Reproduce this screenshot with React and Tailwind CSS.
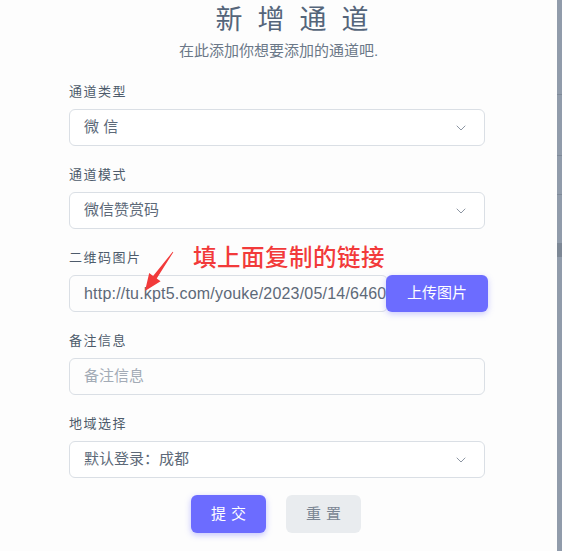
import React from 'react';
import { ChevronDown } from 'lucide-react';

const font = { fontFamily: '"Liberation Sans", "Noto Sans CJK SC", sans-serif' };

function Label({ children }) {
    return <div className="text-[13px] leading-[14px] tracking-[1.5px] text-[#4d5b6b] mb-[10px]">{children}</div>;
}

function SelectBox({ value }) {
    return (
        <div className="h-[37px] border border-[#dadfe5] rounded-[6px] flex items-center justify-between pl-[14px] pr-[15px] bg-white">
            <span className="text-[15px] text-[#5d6978] whitespace-pre">{value}</span>
            <ChevronDown size={16} strokeWidth={1.5} className="text-[#8d96a3]" />
        </div>
    );
}

export default function App() {
    return (
        <div className="w-[562px] h-[551px] flex bg-[#fdfdfd] overflow-hidden" style={font}>
            <div className="flex-1 relative">
                <div className="text-center pt-[4px] text-[27px] leading-[32px] tracking-[15px] pl-[42px] text-[#55657a]">新增通道</div>
                <div className="text-center mt-[5px] text-[15px] leading-[20px] text-[#6b7888]">在此添加你想要添加的通道吧.</div>

                <div className="ml-[69px] w-[416px] mt-[24px]">
                    <Label>通道类型</Label>
                    <SelectBox value="微 信" />

                    <div className="mt-[22px]"><Label>通道模式</Label></div>
                    <SelectBox value="微信赞赏码" />

                    <div className="mt-[22px]"><Label>二维码图片</Label></div>
                    <div className="flex">
                        <div className="flex-1 h-[37px] border border-[#dadfe5] rounded-[6px] flex items-center pl-[14px] overflow-hidden whitespace-nowrap">
                            <span className="text-[16px] tracking-[0.2px] text-[#5d6978]">http://tu.kpt5.com/youke/2023/05/14/6460</span>
                        </div>
                        <button className="-ml-[2px] mr-[-3px] w-[102px] h-[37px] rounded-[6px] bg-[#6c6cff] text-white text-[15px] shadow-[0_2px_6px_rgba(108,108,255,0.35)] relative">上传图片</button>
                    </div>

                    <div className="mt-[22px]"><Label>备注信息</Label></div>
                    <div className="h-[37px] border border-[#dadfe5] rounded-[6px] flex items-center pl-[14px]">
                        <span className="text-[15px] text-[#a3abb6]">备注信息</span>
                    </div>

                    <div className="mt-[22px]"><Label>地域选择</Label></div>
                    <SelectBox value="默认登录：成都" />

                    <div className="flex justify-center gap-[20px] mt-[17px] mr-[2px]">
                        <button className="w-[75px] h-[38px] rounded-[6px] bg-[#6c6cff] text-white text-[15px] tracking-[5px] pl-[5px] shadow-[0_2px_6px_rgba(108,108,255,0.4)]">提交</button>
                        <button className="w-[75px] h-[38px] rounded-[6px] bg-[#e9ecef] text-[#7a8593] text-[15px] tracking-[5px] pl-[5px]">重置</button>
                    </div>
                </div>

                <div className="absolute left-[193px] top-[243px] text-[23.5px] leading-[30px] text-[#f23a3a] font-medium tracking-[0.5px]">填上面复制的链接</div>
                <svg className="absolute left-[138px] top-[248px]" width="40" height="46" viewBox="0 0 40 46">
                    <path d="M35.3 4.2 L18.7 30.5 L22.6 33.3 L7 43 L11.2 25.1 L15.1 27.9 L34.7 3.8 Z" fill="#f23a3a" />
                </svg>
            </div>
            <div className="w-[5px] bg-[#919cab] flex flex-col">
                <div className="h-[94px]" />
                <div className="h-px bg-[#7f8a99]" />
                <div className="h-[60px]" />
                <div className="h-px bg-[#7f8a99]" />
                <div className="h-[38px]" />
                <div className="h-px bg-[#7f8a99]" />
                <div className="h-[48px]" />
                <div className="h-[14px] bg-[#7d8896]" />
            </div>
        </div>
    );
}
